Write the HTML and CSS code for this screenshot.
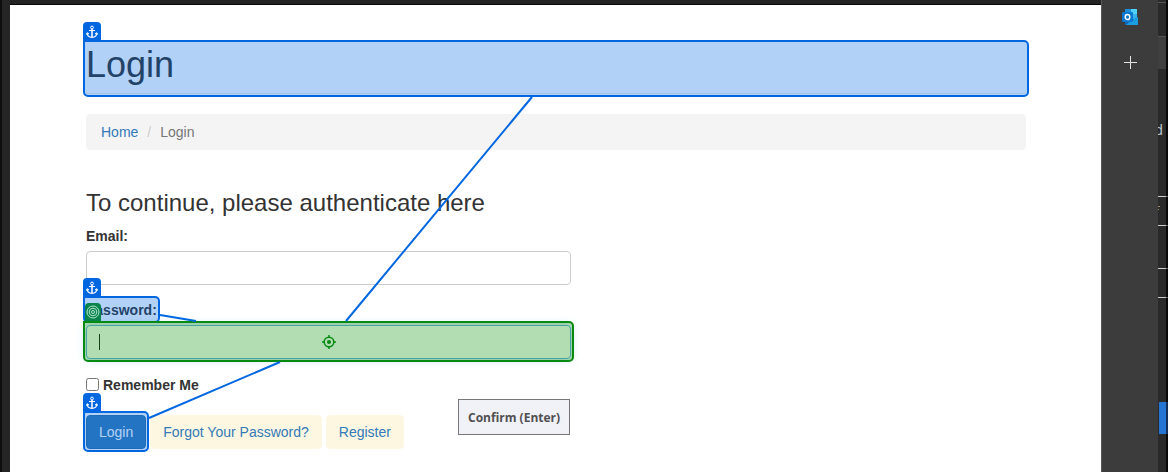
FILE: index.html
```html
<!DOCTYPE html>
<html lang="en">
<head>
<meta charset="utf-8">
<meta name="viewport" content="width=device-width, initial-scale=1">
<title>Login</title>
<link rel="stylesheet" href="styles.css">
</head>
<body>
<svg width="0" height="0" class="defs" aria-hidden="true">
  <symbol id="anchor" viewBox="0 0 12 14">
    <g fill="none" stroke="currentColor" stroke-width="1">
      <circle cx="6" cy="2.500" r="1.400"/>
      <path stroke-width="1.500" d="M6 4v8"/>
      <path d="M3 5.500h6"/>
      <path stroke-width="1.200" d="M1.300 8.500C1.500 11 3.500 12.300 6 12.300s4.500-1.300 4.700-3.800M.4 9.600l.9-1.500 1.500 1M11.600 9.600l-.9-1.500-1.500 1"/>
    </g>
  </symbol>
</svg>
<div class="frame">
  <div class="window-edge"></div>
  <main class="page">
    <div class="content">
      <h1 class="title">Login
        <span class="mark mark-title"><span class="badge"><svg class="anchor"><use href="#anchor"/></svg></span></span>
      </h1>
      <nav aria-label="Breadcrumb">
        <ol class="breadcrumb">
          <li><a href="#">Home</a></li>
          <li class="current">Login</li>
        </ol>
      </nav>
      <h2 class="subtitle">To continue, please authenticate here</h2>
      <form class="form">
        <div class="group">
          <label for="email" class="label">Email:</label>
          <input id="email" class="field" type="email">
        </div>
        <div class="group">
          <label for="password" class="label">Password:
            <span class="mark mark-label"><span class="badge"><svg class="anchor"><use href="#anchor"/></svg></span></span>
          </label>
          <div class="target-wrap">
            <input id="password" class="field focused" type="password">
            <span class="caret"></span>
            <span class="target">
              <span class="target-badge">
                <svg width="14" height="14" viewBox="0 0 14 14" fill="none" stroke="currentColor"><circle cx="7" cy="7" r="6"/><circle cx="7" cy="7" r="3.800"/><circle cx="7" cy="7" r="1.500"/></svg>
              </span>
              <svg width="14" height="14" viewBox="0 0 14 14" fill="none" stroke="currentColor" stroke-width="1.500"><circle cx="7" cy="7" r="4.800"/><path d="M7 0v3M7 11v3M0 7h3M11 7h3"/><circle cx="7" cy="7" r="2" fill="currentColor" stroke="none"/></svg>
            </span>
          </div>
        </div>
        <div class="remember">
          <input id="remember" class="check" type="checkbox">
          <label for="remember">Remember Me</label>
        </div>
        <div class="actions">
          <span class="marked">
            <button type="submit" class="btn primary">Login</button>
            <span class="mark mark-button"><span class="badge"><svg class="anchor"><use href="#anchor"/></svg></span></span>
          </span>
          <a href="#" class="btn">Forgot Your Password?</a>
          <a href="#" class="btn">Register</a>
        </div>
        <button type="button" class="confirm">Confirm (Enter)</button>
      </form>
    </div>
    <svg class="links" width="1091" height="467" fill="none" stroke="#0067e0" stroke-width="2" aria-hidden="true">
      <path d="M522 92L336 316M150 310L186 316M270 357L139 413"/>
    </svg>
  </main>
  <aside class="sidebar">
    <button type="button" class="side-btn" aria-label="Outlook">
      <svg width="16" height="16" viewBox="0 0 16 16">
        <path fill="#1c8fdc" d="M3 0h6v5H3z"/><path fill="#50d0f8" d="M9 0h6v5H9z"/>
        <path fill="#28a8ea" d="M4 5h6v5H4z"/><path fill="#35b2ea" d="M10 5h5v5h-5z"/>
        <path fill="#1066b5" d="M3 8l7 3 6-3v8H3z"/><path fill="#1b9de2" d="M16 8v8H4l6-5z"/>
        <rect y="3" width="11" height="10" rx="1" fill="#0a76d0"/>
        <ellipse cx="5.500" cy="8" rx="2.300" ry="2.600" fill="none" stroke="#fff" stroke-width="1.500"/>
      </svg>
    </button>
    <button type="button" class="side-btn" aria-label="Add">
      <svg width="13" height="13" viewBox="0 0 13 13" stroke="#e4e4e4"><path d="M6.500 0v13M0 6.500h13"/></svg>
    </button>
  </aside>
  <div class="behind">
    <svg width="10" height="472" viewBox="0 0 10 472" aria-hidden="true">
      <path fill="#3f3f3f" d="M0 37h8v32H0z"/>
      <path fill="#555" d="M0 2h8v1H0zM0 36h8v1H0z"/>
      <path fill="#ccc" d="M0 196h8v1H0zM0 225h8v1H0zM0 268h8v1H0zM0 297h8v1H0z"/>
      <path fill="#666" d="M8 196h2v1H8zM8 225h2v1H8zM8 268h2v1H8zM8 297h2v1H8z"/>
      <path fill="#998866" d="M0 206h2v1H0zM0 209h1v1H0z"/>
      <path fill="#2475d4" d="M1 402h7v32H1z"/><path fill="#12305a" d="M8 402h2v32H8z"/>
      <text x="-3" y="135" class="behind-text">d</text>
    </svg>
  </div>
</div>
</body>
</html>
```
FILE: styles.css
```css
* { box-sizing: border-box; }

body {
  margin: 0;
  background: #fff;
  color: #333;
  font: 14px/20px "Liberation Sans", Arial, sans-serif;
}

a { color: #337ab7; text-decoration: none; }
.defs { position: absolute; }
.frame { display: flex; min-height: 100vh; overflow: hidden; }

.window-edge {
  flex: none;
  width: 10px;
  background: #252525;
  border-left: 2px solid #0e0e0e;
}

.page {
  position: relative;
  flex: 1;
  min-width: 0;
  background: linear-gradient(#232323 4px, #050505 4px 5px, #fff 5px);
}

.content { padding: 43px 75px 0 76px; }

.title {
  position: relative;
  margin: 0 0 20px;
  padding: 2px 0 8px;
  border-bottom: 1px solid #eee;
  font-size: 36px;
  line-height: 40px;
  font-weight: 400;
}

.mark {
  position: absolute;
  border: 2px solid #0067e0;
  border-radius: 0 5px 5px 5px;
  background: rgba(0, 103, 224, .3);
  pointer-events: none;
}

.badge {
  position: absolute;
  left: -2px;
  bottom: 100%;
  display: grid;
  place-items: center;
  width: 18px;
  height: 20px;
  border-radius: 4px 4px 0 0;
  background: #0067e0;
  color: #fff;
}

.anchor { width: 12px; height: 14px; }

.breadcrumb {
  display: flex;
  margin: 0 0 40px;
  padding: 8px 15px;
  border-radius: 4px;
  background: #f4f4f4;
  list-style: none;
}

.current { color: #777; }
.current::before { content: "/"; padding: 0 9px; color: #ccc; }

.subtitle { margin: 0 0 10px; font-size: 24px; line-height: 26px; font-weight: 400; }

.form { position: relative; }
.group { width: 52%; max-width: 485px; margin-bottom: 15px; }
.label { position: relative; display: table; margin-bottom: 5px; font-weight: 700; }
.mark-title { inset: -3px -3px -4px; }
.mark-label { inset: -4px -3px -3px; }

.field {
  display: block;
  width: 100%;
  height: 34px;
  padding: 6px 12px;
  border: 1px solid #ccc;
  border-radius: 4px;
  background: #fff;
  font: inherit;
}

.focused { border-color: #66afe9; box-shadow: 0 0 8px rgba(102, 175, 233, .5); }

.target-wrap { position: relative; }

.caret {
  position: absolute;
  left: 13px;
  top: 9px;
  width: 1px;
  height: 16px;
  background: #222;
}

.target {
  position: absolute;
  inset: -4px -3px -3px;
  display: grid;
  place-items: center;
  border: 2px solid #078a12;
  border-radius: 0 5px 5px 5px;
  background: rgba(0, 138, 0, .3);
  color: #078a12;
  pointer-events: none;
}

.target-badge {
  position: absolute;
  left: 0;
  bottom: 100%;
  display: grid;
  place-items: center;
  width: 16px;
  height: 18px;
  margin-bottom: 2px;
  border-radius: 4px 4px 0 0;
  background: #07834c;
  color: #b5e5d0;
}

.remember { display: flex; gap: 4px; padding-top: 1px; margin-bottom: 20px; font-weight: 700; }
.check { width: 13px; height: 13px; margin: 3px 0 0; }

.actions { display: flex; gap: 4px; padding-bottom: 20px; }
.marked { position: relative; }
.mark-button { inset: -4px -3px -3px; }

.btn {
  display: block;
  padding: 6px 12px;
  border: 1px solid #fcf8e3;
  border-radius: 4px;
  background: #fdf7e2;
  font: inherit;
  white-space: nowrap;
}

.primary { border-color: #2e6da4; background: #337ab7; color: #fff; }

.confirm {
  position: absolute;
  left: 372px;
  top: 173px;
  height: 36px;
  padding: 2px 9px 0;
  border: 1px solid #777;
  background: #f1f1f8;
  color: #505050;
  font: 700 12px/16px "Open Sans", "Noto Sans", sans-serif;
  white-space: nowrap;
}

.links { position: absolute; left: 0; top: 5px; pointer-events: none; }

.sidebar {
  flex: none;
  display: flex;
  flex-direction: column;
  align-items: center;
  gap: 21px;
  width: 57px;
  padding-top: 5px;
  border-left: 1px solid #585858;
  background: #3c3c3c;
}

.side-btn {
  display: grid;
  place-items: center;
  width: 24px;
  height: 24px;
  padding: 0;
  border: 0;
  background: none;
}

.behind {
  flex: none;
  width: 10px;
  background: linear-gradient(90deg, #2a2a2a 8px, #090909 8px);
}

.behind svg { display: block; }
.behind-text { font: 14px "Liberation Sans", Arial, sans-serif; fill: #b9c5cc; }
```
